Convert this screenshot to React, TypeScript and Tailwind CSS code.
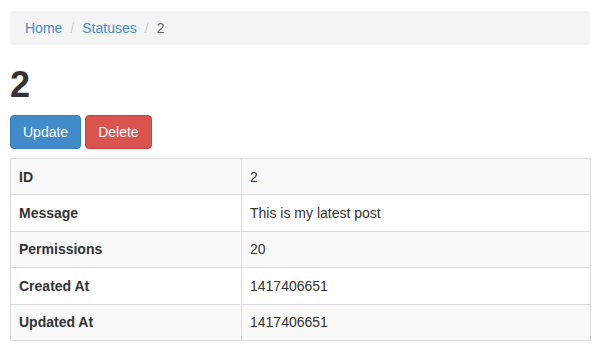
const rows = [
  ['ID', '2'],
  ['Message', 'This is my latest post'],
  ['Permissions', '20'],
  ['Created At', '1417406651'],
  ['Updated At', '1417406651'],
];

export default function App() {
  return (
    <div className="min-h-[356px] bg-white px-[10px] pt-[11px] font-['Liberation_Sans',Arial,sans-serif] text-[14px] leading-[20px] text-[#333]">
      {/* Breadcrumb */}
      <ol className="flex h-[34px] items-center rounded-[4px] bg-[#f5f5f5] px-[15px]">
        <li>
          <a className="text-[#428bca]" href="#">Home</a>
        </li>
        <li className="px-[8px] text-[#ccc]">/</li>
        <li>
          <a className="text-[#428bca]" href="#">Statuses</a>
        </li>
        <li className="px-[8px] text-[#ccc]">/</li>
        <li className="text-[#666]">2</li>
      </ol>

      <h1 className="mt-[20px] mb-[10px] text-[36px] leading-[40px] font-bold text-[#333]">2</h1>

      <div className="flex gap-[4px]">
        <button className="h-[34px] rounded-[4px] border border-[#357ebd] bg-[#428bca] px-[12px] text-white">
          Update
        </button>
        <button className="h-[34px] rounded-[4px] border border-[#d43f3a] bg-[#d9534f] px-[12px] text-white">
          Delete
        </button>
      </div>

      <table className="mt-[9px] w-[581px] border-collapse border border-[#ddd]">
        <tbody>
          {rows.map(([label, value], i) => (
            <tr key={label} className={i % 2 === 0 ? 'bg-[#f9f9f9]' : 'bg-white'}>
              <th className="h-[36.4px] w-[231px] border border-[#ddd] px-[8px] text-left align-middle font-bold">
                {label}
              </th>
              <td className="h-[36.4px] border border-[#ddd] px-[8px] align-middle">{value}</td>
            </tr>
          ))}
        </tbody>
      </table>
    </div>
  );
}
